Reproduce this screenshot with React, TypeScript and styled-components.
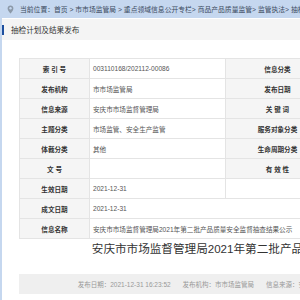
import React from 'react';
import styled, { createGlobalStyle } from 'styled-components';

const GlobalStyle = createGlobalStyle`
  html, body {
    margin: 0;
    padding: 0;
    background: #fff;
    overflow: hidden;
  }
  body {
    font-family: "Liberation Sans", "Noto Sans CJK SC", sans-serif;
    color: #333;
  }
`;

const Page = styled.div`
  width: 600px;
  min-height: 300px;
  border-left: 2px solid #c5d7ef;
  background: #fff;
`;

const Crumbs = styled.div`
  height: 18px;
  background: #c5d7ef;
  display: flex;
  align-items: center;
  gap: 6px;
  padding-left: 5px;
  font-size: 6.8px;
  color: #3b4a5e;
  white-space: nowrap;
`;

const SectionHead = styled.div`
  height: 21px;
  margin-top: 1px;
  background: #f4f4f4;
  display: flex;
  align-items: center;
  gap: 7px;
  font-size: 7.6px;
  color: #333;
`;

const Marker = styled.span`
  width: 2px;
  height: 10px;
  background: #1d4e9e;
`;

const Body = styled.div`
  width: 496px;
  padding: 18px 0 0 17px;
`;

const Sheet = styled.table`
  width: 100%;
  border-collapse: collapse;
  table-layout: fixed;
  font-size: 6.6px;
`;

const Label = styled.th`
  height: 19px;
  padding: 0;
  background: #f5f5f5;
  border: 1px solid #e4e4e4;
  font-weight: bold;
  color: #333;
  text-align: center;
  white-space: nowrap;
`;

const Value = styled.td`
  height: 19px;
  padding: 0 0 0 3px;
  border: 1px solid #e4e4e4;
  color: #555;
  white-space: nowrap;
  overflow: hidden;
`;

const Headline = styled.h1`
  margin: 3px 0 0;
  font-size: 11.6px;
  line-height: 14px;
  font-weight: normal;
  color: #333;
  text-align: center;
  white-space: nowrap;
`;

const MetaBar = styled.div`
  margin-top: 18px;
  height: 20px;
  background: #efefef;
  display: flex;
  align-items: center;
  justify-content: center;
  gap: 12px;
  font-size: 6.5px;
  color: #999;
  white-space: nowrap;
`;

const Pin = () => (
  <svg width="7" height="9" viewBox="0 0 7 9">
    <path d="M3.5 0.5C1.8 0.5 0.6 1.8 0.6 3.4 0.6 5.4 3.5 8.5 3.5 8.5S6.4 5.4 6.4 3.4C6.4 1.8 5.2 0.5 3.5 0.5Z" fill="#8c99a8" />
    <circle cx="3.5" cy="3.3" r="1.2" fill="#c5d7ef" />
  </svg>
);

type Row = { label: string; value: string; label2?: string; wide?: boolean };

const rows: Row[] = [
  { label: '索 引 号', value: '003110168/202112-00086', label2: '信息分类' },
  { label: '发布机构', value: '市市场监管局', label2: '发布日期' },
  { label: '信息来源', value: '安庆市市场监督管理局', label2: '关 键 词' },
  { label: '主题分类', value: '市场监管、安全生产监管', label2: '服务对象分类' },
  { label: '体裁分类', value: '其他', label2: '生命周期分类' },
  { label: '文 号', value: '', label2: '有 效 性' },
  { label: '生效日期', value: '2021-12-31' },
  { label: '成文日期', value: '2021-12-31', wide: true },
];

const title = '安庆市市场监督管理局2021年第二批产品质量安全监督抽查结果公示';

export default function App() {
  return (
    <>
      <GlobalStyle />
      <Page>
        <Crumbs>
          <Pin />
          <span>当前位置：首页 &gt; 市市场监管局 &gt; 重点领域信息公开专栏&gt; 商品产品质量监管&gt; 监管执法&gt; 抽检计划及结果发布</span>
        </Crumbs>
        <SectionHead>
          <Marker />
          抽检计划及结果发布
        </SectionHead>
        <Body>
          <Sheet>
            <colgroup>
              <col style={{ width: 70 }} />
              <col style={{ width: 136 }} />
              <col style={{ width: 104 }} />
              <col />
            </colgroup>
            <tbody>
              {rows.map(r => (
                <tr key={r.label}>
                  <Label>{r.label}</Label>
                  {r.wide ? (
                    <Value colSpan={3}>{r.value}</Value>
                  ) : (
                    <>
                      <Value>{r.value}</Value>
                      {r.label2 ? <Label>{r.label2}</Label> : <Value />}
                      <Value />
                    </>
                  )}
                </tr>
              ))}
              <tr>
                <Label>信息名称</Label>
                <Value colSpan={3}>{title}</Value>
              </tr>
            </tbody>
          </Sheet>
          <Headline>{title}</Headline>
          <MetaBar>
            <span>发布日期：2021-12-31 16:23:52</span>
            <span>发布机构：市市场监管局</span>
            <span>信息来源：安庆市市场监督管理局</span>
            <span>【字体：大 中 小】</span>
            <span>打印</span>
          </MetaBar>
        </Body>
      </Page>
    </>
  );
}
